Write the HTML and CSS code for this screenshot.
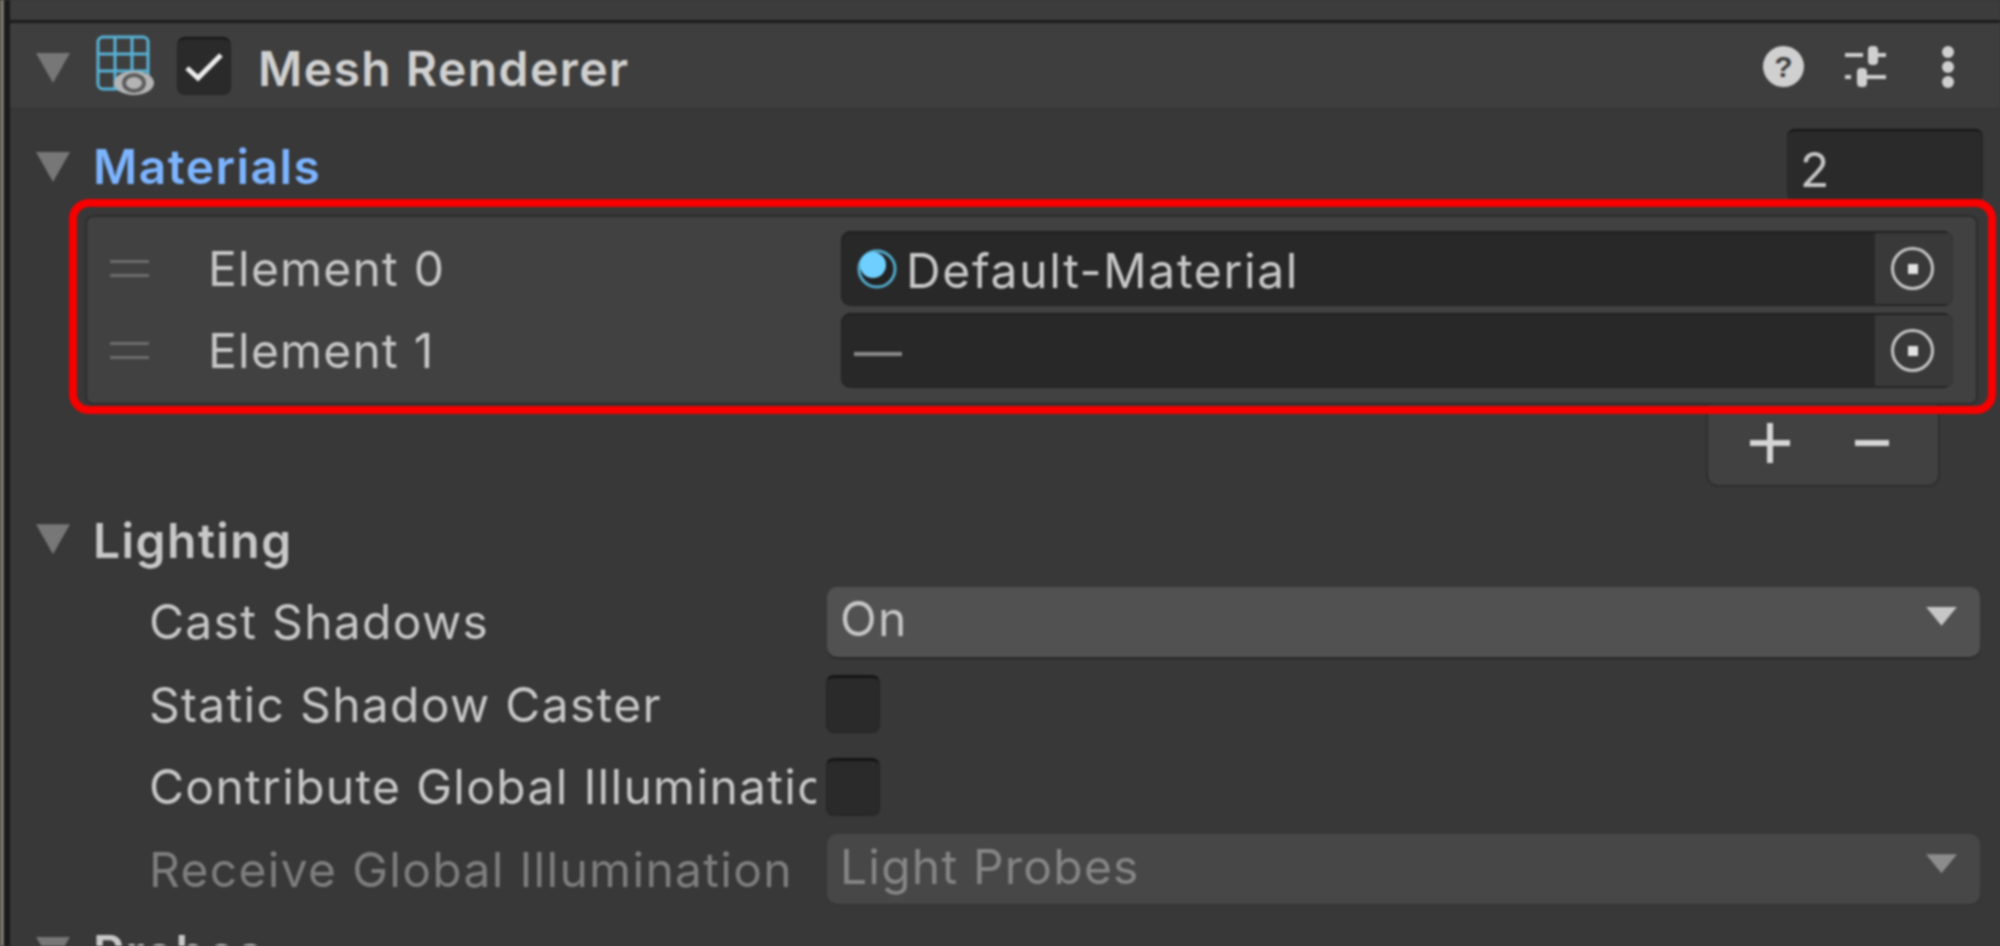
FILE: index.html
```html
<!DOCTYPE html>
<html lang="en">
<head>
<meta charset="utf-8">
<title>Mesh Renderer</title>
<link rel="stylesheet" href="styles.css">
</head>
<body>
<div class="app">
  <div class="edge"></div>
  <main class="inspector">
    <div class="prev-strip"></div>
    <header class="comp-header">
      <span class="tri tri-fold"></span>
      <svg class="mesh-icon" width="60" height="62" viewBox="0 0 60 62" aria-hidden="true">
        <g fill="none" stroke="#58b2d6" stroke-width="3">
          <rect x="3" y="2" width="50" height="52" rx="5"/>
          <path d="M20 2V54M37 2V40M3 19H53M3 36H53"/>
        </g>
        <ellipse cx="39" cy="48" rx="20" ry="12" fill="#b4b4b4"/>
        <ellipse cx="39" cy="48" rx="10" ry="8" fill="none" stroke="#5c5c5c" stroke-width="4"/>
      </svg>
      <span class="check check-head">
        <svg width="53" height="58" viewBox="0 0 53 58" aria-hidden="true"><path d="M10 31L21 41L44 18" fill="none" stroke="#ececec" stroke-width="5"/></svg>
      </span>
      <span class="comp-title">Mesh Renderer</span>
      <span class="head-tools">
        <span class="help">?</span>
        <svg class="sliders" width="41" height="41" viewBox="0 0 41 41" aria-hidden="true">
          <g fill="#cfcfcf">
            <rect x="0" y="7" width="18" height="4"/><rect x="23" y="0" width="10" height="19" rx="4"/><rect x="33" y="7" width="8" height="4"/>
            <rect x="0" y="29" width="6" height="4"/><rect x="12" y="22" width="10" height="19" rx="4"/><rect x="22" y="29" width="19" height="4"/>
          </g>
        </svg>
        <span class="dots"><i></i><i></i><i></i></span>
      </span>
    </header>

    <section class="materials">
      <div class="mat-head">
        <span class="tri tri-fold"></span>
        <span class="mat-title">Materials</span>
        <span class="count">2</span>
      </div>
      <div class="list">
        <div class="item">
          <span class="handle"></span>
          <span class="item-label">Element 0</span>
          <div class="objfield">
            <svg class="mat-icon" width="42" height="42" viewBox="0 0 42 42" aria-hidden="true">
              <circle cx="21" cy="21" r="18" fill="#222" stroke="#52aacb" stroke-width="3"/>
              <circle cx="17" cy="17" r="13" fill="#6fd0ff"/>
            </svg>
            <span class="obj-name">Default-Material</span>
            <span class="picker"><span class="target"><i></i></span></span>
          </div>
        </div>
        <div class="item">
          <span class="handle"></span>
          <span class="item-label">Element 1</span>
          <div class="objfield">
            <span class="dash">—</span>
            <span class="picker"><span class="target"><i></i></span></span>
          </div>
        </div>
      </div>
      <div class="footer"><span class="plus"></span><span class="minus"></span></div>
      <div class="annotation"></div>
    </section>

    <section class="group">
      <div class="group-head"><span class="tri tri-fold"></span><span class="group-title">Lighting</span></div>
      <div class="row"><span class="label">Cast Shadows</span><div class="dropdown"><span>On</span><span class="tri tri-drop"></span></div></div>
      <div class="row"><span class="label">Static Shadow Caster</span><span class="check"></span></div>
      <div class="row"><span class="label">Contribute Global Illumination</span><span class="check"></span></div>
      <div class="row is-off"><span class="label">Receive Global Illumination</span><div class="dropdown"><span>Light Probes</span><span class="tri tri-drop"></span></div></div>
      <div class="group-head"><span class="tri tri-fold"></span><span class="group-title">Probes</span></div>
    </section>
  </main>
</div>
</body>
</html>
```
FILE: styles.css
```css
* { box-sizing: border-box; }
html, body { margin: 0; padding: 0; background: #383838; }
.app {
  display: flex;
  width: 2000px;
  height: 946px;
  overflow: hidden;
  font-family: Inter, "Liberation Sans", sans-serif;
  font-size: 48px;
  letter-spacing: 1.45px;
  color: #c6c6c6;
  filter: blur(0.9px);
}
.edge {
  flex: 0 0 10px;
  background: linear-gradient(90deg, #7a736c 0 4px, #1a1a1a 4px);
}
.inspector { flex: 1; min-width: 0; }
.prev-strip { height: 23px; background: #3c3c3c; border-bottom: 3px solid #1b1b1b; }

.tri { display: block; clip-path: polygon(0 0, 100% 0, 50% 100%); flex: none; }
.tri-fold { width: 34px; height: 30px; background: #777; }
.tri-drop { width: 31px; height: 19px; background: #c6c6c6; }

.comp-header {
  display: flex;
  align-items: center;
  height: 86px;
  padding-left: 26px;
  background: #3e3e3e;
  border-bottom: 1px solid #343434;
}
.comp-header .tri-fold { margin-top: 5px; }
.mesh-icon { margin-left: 25px; flex: none; }
.check {
  display: block;
  flex: none;
  width: 54px;
  height: 58px;
  background: #2a2a2a;
  border: 1px solid #252525;
  border-top: 3px solid #151515;
  border-radius: 8px;
}
.check-head { margin-left: 22px; border-top-width: 2px; }
.check-head svg { display: block; margin: -2px 0 0 -1px; }
.comp-title { margin-left: 27px; padding-top: 5px; font-weight: 600; color: #d0d0d0; }
.head-tools { display: flex; align-items: center; margin-left: auto; height: 100%; padding-top: 2px; }
.help {
  width: 41px; height: 41px;
  border-radius: 50%;
  background: #d0d0d0;
  color: #3e3e3e;
  font: 700 30px/41px "Liberation Sans", sans-serif;
  letter-spacing: 0;
  text-align: center;
}
.sliders { margin-left: 41px; }
.dots { display: flex; flex-direction: column; gap: 3px; margin: 0 46px 0 56px; }
.dots i { display: block; width: 12px; height: 12px; border-radius: 50%; background: #cfcfcf; }

.materials { position: relative; }
.mat-head { display: flex; align-items: flex-start; height: 90px; padding-left: 26px; }
.mat-head .tri-fold { margin-top: 43px; }
.mat-title { margin: 32px 0 0 23px; font-weight: 600; color: #7cb4ff; line-height: 52px; }
.count {
  width: 196px; height: 73px;
  margin: 20px 17px 0 auto;
  padding: 13px 0 0 13px;
  background: #2a2a2a;
  border-top: 2px solid #151515;
  border-radius: 8px;
  line-height: 52px;
}
.list {
  display: flex;
  flex-direction: column;
  gap: 7px;
  margin: 16px 22px 0 75px;
  padding: 16px 25px 17px 25px;
  background: #414141;
  box-shadow: inset 0 0 0 2px #2d2d2d;
  border-radius: 8px;
}
.item { display: flex; align-items: center; height: 75px; }
.handle {
  flex: none;
  width: 39px; height: 17px;
  border-top: 3px solid #6c6c6c;
  border-bottom: 3px solid #6c6c6c;
}
.item-label { margin: 0 0 0 59px; width: 633px; flex: none; letter-spacing: 1.2px; }
.objfield {
  flex: 1;
  display: flex;
  align-items: center;
  align-self: stretch;
  padding-left: 15px;
  background: #282828;
  box-shadow: inset 0 2px 0 #202020, inset 0 0 0 1px #232323;
  border-radius: 10px;
  overflow: hidden;
}
.mat-icon { flex: none; }
.obj-name { margin: 4px 0 0 8px; color: #c8c8c8; letter-spacing: 1.65px; }
.dash { color: #8a8a8a; margin: 3px 0 0 -2px; line-height: 1; }
.picker {
  display: flex;
  align-items: center;
  justify-content: center;
  width: 78px;
  align-self: stretch;
  margin: 2px 0 2px auto;
  padding-right: 3px;
  background: #393939;
}
.target {
  display: flex;
  align-items: center;
  justify-content: center;
  width: 43px; height: 43px;
  border: 3px solid #c6c6c6;
  border-radius: 50%;
}
.target i { display: block; width: 10px; height: 10px; background: #e2e2e2; }

.footer {
  display: flex;
  align-items: center;
  gap: 65px;
  width: 234px;
  height: 82px;
  margin: 0 60px 0 auto;
  padding: 0 0 4px 42px;
  background: #414141;
  border: 2px solid #2f2f2f;
  border-top: 0;
  border-radius: 0 0 12px 12px;
}
.plus { display: block; width: 40px; height: 40px;
  background:
    linear-gradient(#d4d4d4, #d4d4d4) center / 100% 6px no-repeat,
    linear-gradient(#d4d4d4, #d4d4d4) center / 6px 100% no-repeat; }
.minus { display: block; width: 34px; height: 6px; background: #d4d4d4; }

.annotation {
  position: absolute;
  left: 59px;
  top: 90px;
  width: 1927px;
  height: 215px;
  border: 8px solid #f80000;
  border-radius: 20px;
  pointer-events: none;
}

.group { margin-top: 11px; }
.group-head { display: flex; align-items: center; height: 82.5px; padding-left: 26px; }
.group-title { margin-left: 23px; padding-top: 2px; font-weight: 600; color: #c8c8c8; }
.row { display: flex; align-items: center; height: 82.5px; padding-left: 139px; }
.label { flex: none; width: 667px; margin-right: 10px; overflow: hidden; white-space: nowrap; letter-spacing: 1.3px; }
.dropdown {
  display: flex;
  align-items: center;
  justify-content: space-between;
  width: 1153px;
  height: 70px;
  margin-left: 1px;
  padding: 0 23px 6px 13px;
  background: #515151;
  box-shadow: 0 2px 0 #2a2a2a;
  border-radius: 10px;
}
.dropdown span:first-child { letter-spacing: 1.2px; }
.tri-drop { margin-bottom: 5px; }
.is-off .label { color: #7e7e7e; }
.is-off .dropdown { background: #474747; color: #858585; box-shadow: 0 1px 0 #333; }
.is-off .tri-drop { background: #8c8c8c; }
```
